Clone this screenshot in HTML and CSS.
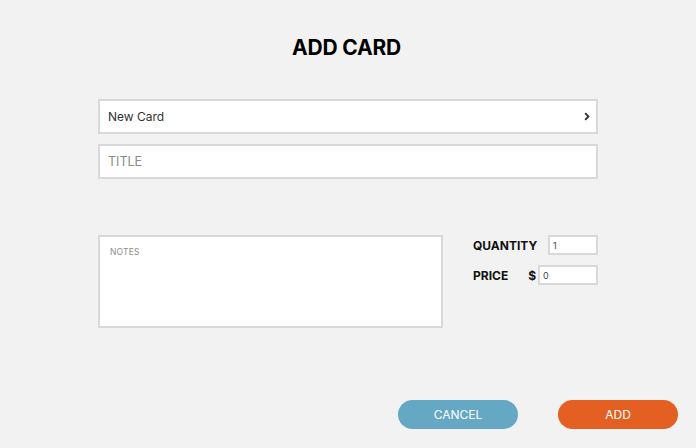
FILE: index.html
```html
<!DOCTYPE html>
<html>
<head>
<meta charset="utf-8">
<link rel="stylesheet" href="styles.css">
</head>
<body>
<div class="page">
  <h1 class="title">ADD CARD</h1>
  <div class="form">
    <div class="field select">
      <span class="select-text">New Card</span>
      <svg class="chev" width="6" height="9" viewBox="0 0 6 9"><path d="M1.2 1.2 L4.4 4.5 L1.2 7.8" fill="none" stroke="#333" stroke-width="1.9"/></svg>
    </div>
    <div class="field">
      <span class="placeholder">TITLE</span>
    </div>
    <div class="lower">
      <div class="notes"><span class="notes-ph">NOTES</span></div>
      <div class="side">
        <div class="row">
          <span class="label">QUANTITY</span>
          <span class="small-input qty">1</span>
        </div>
        <div class="row">
          <span class="label">PRICE</span>
          <span class="dollar">$</span>
          <span class="small-input price">0</span>
        </div>
      </div>
    </div>
  </div>
  <div class="actions">
    <button class="btn cancel">CANCEL</button>
    <button class="btn add">ADD</button>
  </div>
</div>
</body>
</html>
```
FILE: styles.css
```css
html, body {
  margin: 0;
  padding: 0;
  background: #f2f2f2;
  font-family: Inter, "Noto Sans", sans-serif;
}
.page {
  width: 696px;
  height: 448px;
  display: flex;
  flex-direction: column;
}
.title {
  margin: 36px 0 0;
  font-size: 21px;
  line-height: 24px;
  font-weight: 700;
  text-align: center;
  color: #000;
  letter-spacing: -0.2px;
  padding-right: 3px;
}
.form {
  width: 500px;
  margin: 39px auto 0;
  display: flex;
  flex-direction: column;
  gap: 10px;
}
.field {
  box-sizing: border-box;
  height: 35px;
  background: #fff;
  border: 2px solid #d9d9d9;
  display: flex;
  align-items: center;
  padding: 0 8px;
  font-size: 12px;
}
.select {
  justify-content: space-between;
  color: #333;
}
.chev {
  margin-right: -2px;
}
.placeholder {
  color: #8a8a8a;
  font-size: 12.5px;
}
.lower {
  margin-top: 46px;
  display: flex;
  justify-content: space-between;
}
.notes {
  box-sizing: border-box;
  width: 345px;
  height: 93px;
  background: #fff;
  border: 2px solid #d9d9d9;
  padding: 10px 10px;
}
.notes-ph {
  display: block;
  font-size: 8.5px;
  line-height: 10px;
  color: #8d8d8d;
  letter-spacing: 0.2px;
}
.side {
  width: 125px;
  display: flex;
  flex-direction: column;
  gap: 10px;
}
.row {
  display: flex;
  align-items: center;
  height: 20px;
}
.label {
  font-size: 12px;
  font-weight: 700;
  color: #111;
  flex: 1;
}
.dollar {
  font-size: 12px;
  font-weight: 700;
  color: #111;
  margin-right: 2px;
}
.small-input {
  box-sizing: border-box;
  height: 20px;
  background: #fff;
  border: 2px solid #d9d9d9;
  font-size: 9px;
  color: #444;
  display: flex;
  align-items: center;
  padding-left: 3px;
}
.qty { width: 50px; }
.price { width: 60px; }
.actions {
  margin-top: 72px;
  display: flex;
  justify-content: flex-end;
  gap: 40px;
  padding-right: 18px;
}
.btn {
  width: 120px;
  height: 29px;
  border: none;
  border-radius: 15px;
  color: #fff;
  font-family: Inter, "Noto Sans", sans-serif;
  font-size: 12px;
  padding: 0;
}
.cancel { background: #64a8c4; }
.add { background: #e35f22; }
```
